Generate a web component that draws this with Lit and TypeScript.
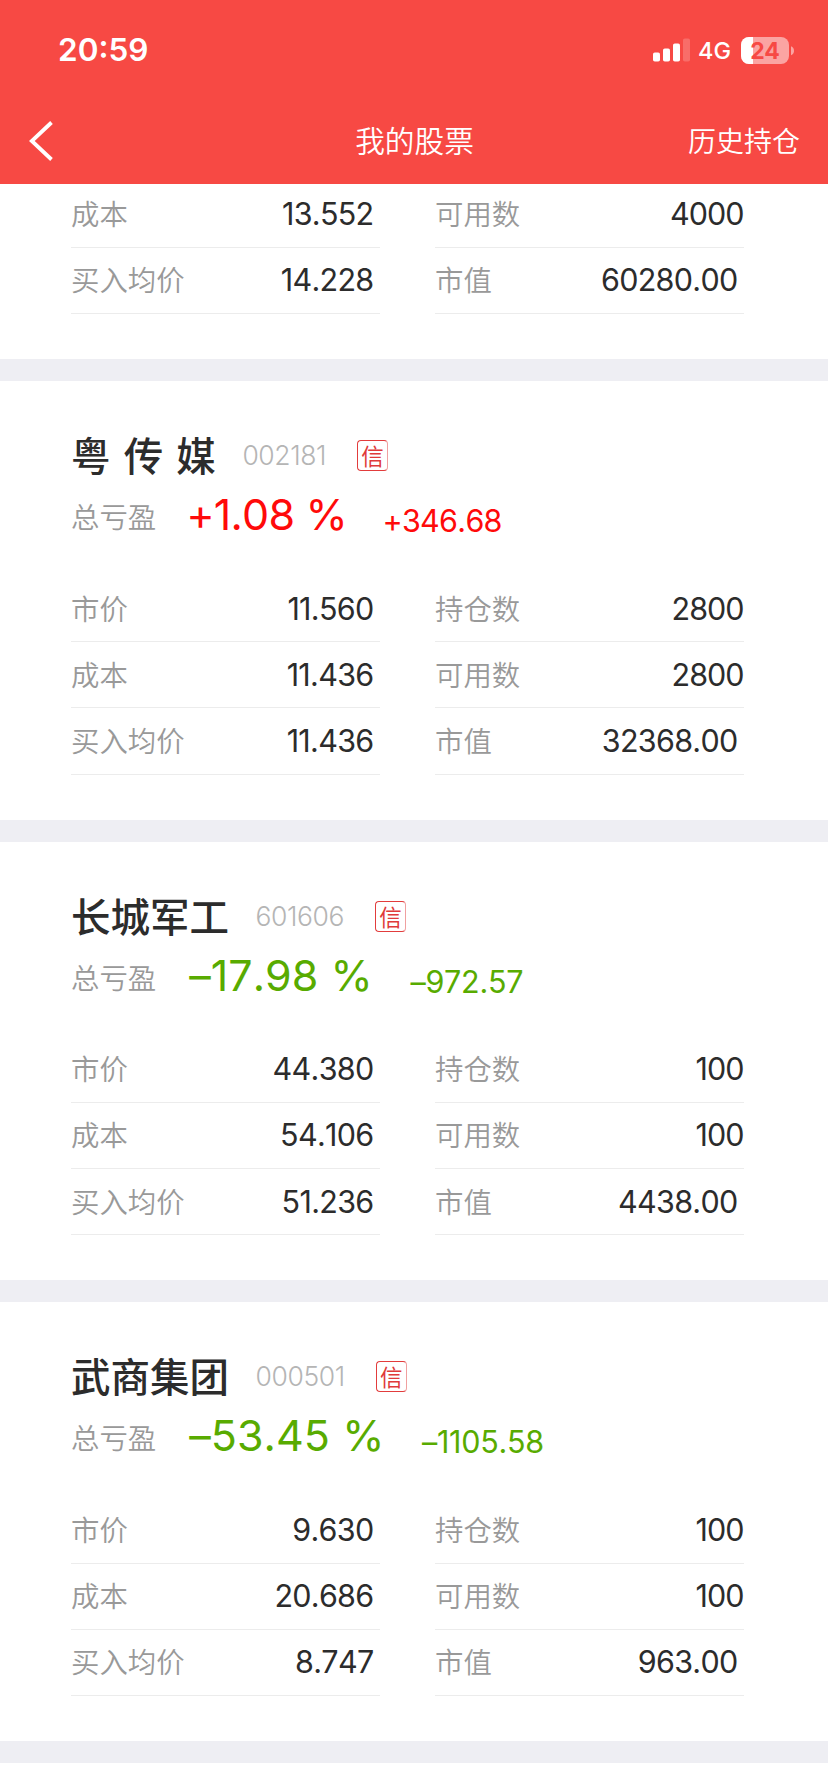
import { LitElement, html, css } from "lit";
import { customElement, property } from "lit/decorators.js";

interface Stock {
  name: string;
  code: string;
  percent: string;
  amount: string;
  rows: [string, string, string, string][];
}

const STOCKS: Stock[] = [
  {
    name: "粤 传 媒", code: "002181", percent: "+1.08 %", amount: "+346.68",
    rows: [
      ["市价", "11.560", "持仓数", "2800"],
      ["成本", "11.436", "可用数", "2800"],
      ["买入均价", "11.436", "市值", "32368.00"],
    ],
  },
  {
    name: "长城军工", code: "601606", percent: "–17.98 %", amount: "–972.57",
    rows: [
      ["市价", "44.380", "持仓数", "100"],
      ["成本", "54.106", "可用数", "100"],
      ["买入均价", "51.236", "市值", "4438.00"],
    ],
  },
  {
    name: "武商集团", code: "000501", percent: "–53.45 %", amount: "–1105.58",
    rows: [
      ["市价", "9.630", "持仓数", "100"],
      ["成本", "20.686", "可用数", "100"],
      ["买入均价", "8.747", "市值", "963.00"],
    ],
  },
];

@customElement("stock-rows")
class StockRows extends LitElement {
  @property({ attribute: false }) rows: string[][] = [];

  static styles = css`
    :host { display: block; }
    .row { display: grid; grid-template-columns: 309px 309px; column-gap: 55px; height: 66.2px; }
    .cell {
      display: flex; justify-content: space-between; align-items: center;
      box-sizing: border-box; border-bottom: 1px solid #ececec; padding: 0 6.5px 1px 0;
    }
    .label { color: #999; font: 350 28.4px "Noto Sans CJK SC", sans-serif; margin-bottom: 2px; }
    .value { color: #2c2c2c; font: 400 30.5px Inter, sans-serif; letter-spacing: -0.7px; font-kerning: none; }
    .whole { margin-right: -6px; letter-spacing: -1px; }
  `;

  render() {
    return this.rows.map(([a, b, c, d]) => html`
      <div class="row">
        <div class="cell"><span class="label">${a}</span><span class="value">${b}</span></div>
        <div class="cell"><span class="label">${c}</span><span class="value ${d.includes(".") ? "" : "whole"}">${d}</span></div>
      </div>`);
  }
}

@customElement("stock-card")
class StockCard extends LitElement {
  @property({ attribute: false }) stock!: Stock;

  static styles = css`
    :host { display: block; box-sizing: border-box; height: 438.7px; padding: 49px 0 0 71px; }
    .head { display: flex; align-items: center; height: 50px; }
    .name {
      color: #2c2c2c; font: 500 39.5px/50px "Noto Sans CJK SC", sans-serif;
      white-space: pre; word-spacing: 4.3px; margin-bottom: 2px;
    }
    .code { margin-left: 26.5px; color: #b5b5b5; font: 300 26.5px/50px Inter, sans-serif; letter-spacing: -0.4px; }
    .badge {
      display: flex; align-items: center; justify-content: center;
      width: 31px; height: 31px; margin: 1px 0 0 31px; box-sizing: border-box;
      border: 1px solid #e23c3c; border-right-color: #f0a0a0; border-radius: 4px;
      color: #e03a3a; font: 400 22.5px/29px "Noto Sans CJK SC", sans-serif;
    }
    .sum { display: flex; align-items: baseline; box-sizing: border-box; height: 96px; padding-top: 4px; }
    .sum-label { color: #999; font: 350 28.4px/60px "Noto Sans CJK SC", sans-serif; position: relative; top: -2px; }
    .percent { margin-left: 30px; font: 400 43px/60px Inter, sans-serif; letter-spacing: -0.8px; white-space: pre; font-kerning: none; }
    .amount { margin-left: 35.5px; font: 400 30.5px/60px Inter, sans-serif; letter-spacing: -0.7px; font-kerning: none; position: relative; top: 2px; }
    .up { color: #ff0a0a; }
    .down { color: #58ab00; }
    .percent.down { margin-left: 33px; letter-spacing: 0.05px; }
    .amount.down { margin-left: 37.5px; letter-spacing: -0.25px; }
  `;

  render() {
    const s = this.stock;
    const tone = s.percent.startsWith("+") ? "up" : "down";
    return html`
      <div class="head">
        <span class="name">${s.name}</span><span class="code">${s.code}</span><span class="badge">信</span>
      </div>
      <div class="sum">
        <span class="sum-label">总亏盈</span>
        <span class="percent ${tone}">${s.percent}</span>
        <span class="amount ${tone}">${s.amount}</span>
      </div>
      <stock-rows .rows=${s.rows}></stock-rows>`;
  }
}

@customElement("app-root")
class AppRoot extends LitElement {
  static styles = css`
    :host { display: block; height: 1792px; overflow: hidden; background: #fff; }
    .header { height: 184px; background: #f74944; color: #fff; }
    .status { display: flex; align-items: center; justify-content: space-between; height: 100px; padding: 0 33px 0 58px; }
    .time { font: 600 31.5px/100px Inter, sans-serif; }
    .system { display: flex; align-items: center; }
    .net { margin: 1px 10px 0 6.7px; font: 500 23.5px/30px Inter, sans-serif; }
    .nav { display: grid; grid-template-columns: 1fr auto 1fr; align-items: center; height: 80px; padding: 0 28px 0 29px; }
    .title { font: 350 29.7px/79px "Noto Sans CJK SC", sans-serif; margin-bottom: 2px; }
    .history { justify-self: end; font: 350 28px/79px "Noto Sans CJK SC", sans-serif; margin-bottom: 1px; }
    .back, .signal, .battery { display: block; }
    .tail { padding: 0 0 45.3px 71px; margin-top: -2.7px; }
    .band { height: 22px; background: #eeeef3; }
    .level { font: 700 23px Inter, sans-serif; }
  `;

  render() {
    return html`
      <div class="header">
        <div class="status">
          <span class="time">20:59</span>
          <div class="system">
            <svg class="signal" width="38" height="24" viewBox="0 0 38 24" fill="#fff">
              <rect x="0" y="14.5" width="7" height="9" rx="1.8" />
              <rect x="10" y="10.5" width="7" height="13" rx="1.8" />
              <rect x="20" y="5.5" width="7" height="18" rx="1.8" />
              <rect x="30" y="0.5" width="7" height="23" rx="1.8" opacity=".2" />
            </svg>
            <span class="net">4G</span>
            <svg class="battery" width="54" height="27" viewBox="0 0 54 27">
              <defs><clipPath id="charge"><rect width="12" height="27" /></clipPath></defs>
              <rect width="48" height="27" rx="8" fill="#fba4a2" />
              <rect width="48" height="27" rx="8" fill="#fff" clip-path="url(#charge)" />
              <path d="M50 9.2q3 1.1 3 4.5t-3 4.5z" fill="#fba4a2" />
              <text class="level" x="24" y="22" text-anchor="middle" fill="#f74944">24</text>
            </svg>
          </div>
        </div>
        <div class="nav">
          <svg class="back" width="26" height="42" viewBox="0 0 26 42" fill="none" stroke="#fff" stroke-width="3.8">
            <path d="M22.5 2.5 2.8 21 22.5 39.5" />
          </svg>
          <span class="title">我的股票</span>
          <span class="history">历史持仓</span>
        </div>
      </div>
      <div class="tail">
        <stock-rows .rows=${[["成本", "13.552", "可用数", "4000"], ["买入均价", "14.228", "市值", "60280.00"]]}></stock-rows>
      </div>
      <div class="band"></div>
      ${STOCKS.map((s) => html`<stock-card .stock=${s}></stock-card><div class="band"></div>`)}`;
  }
}
